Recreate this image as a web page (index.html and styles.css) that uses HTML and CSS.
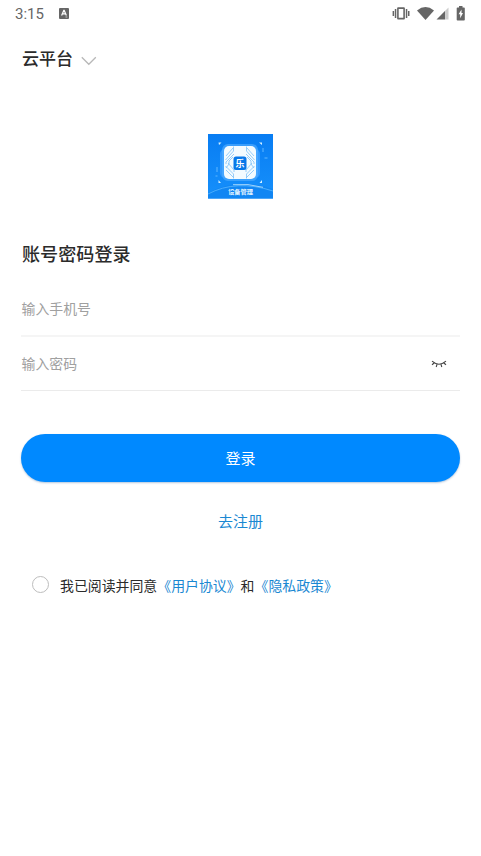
FILE: index.html
```html
<!DOCTYPE html>
<html lang="zh-CN">
<head>
<meta charset="utf-8">
<title>账号密码登录</title>
<link rel="stylesheet" href="styles.css">
</head>
<body>
<header class="status">
  <span class="time">3:15</span>
  <svg class="app-badge" width="10" height="11" viewBox="0 0 10 11"><rect width="10" height="11" rx="1" fill="#666"/><path d="M2.6 7.4 4.8 2.4h.4l2.2 5M3.4 5.9h3.2" fill="none" stroke="#fff" stroke-width="1.2"/><path d="M6.5 9h1.8" stroke="#ddd" stroke-width=".8"/></svg>
  <svg class="tray" width="76" height="18" viewBox="0 0 76 18">
    <g fill="#666">
      <path d="M.6 7h1.5v5H.6zM2.8 5h1.5v9H2.8zM13.8 5h1.5v9h-1.5zM16 7h1.5v5H16z"/>
      <path fill-rule="evenodd" d="M6.1 3.2h5.8q1 0 1 1v10.2q0 1-1 1H6.1q-1 0-1-1V4.200q0-1 1-1zM6.700 5v8.700h4.600V5z"/>
      <path d="M25 6.400Q33.500-.400 42 6.400L33.500 16z"/>
      <path d="M44.500 15.500 53.200 6.800v8.700z"/>
      <path fill="#ccc" d="M53.200 6.800 56.500 3.500v12h-3.300z"/>
      <path fill-rule="evenodd" d="M67 3.500V2h3.500v1.500H72q.8 0 .8.8v11.400q0 .8-.8.800h-6.500q-.8 0-.8-.8V4.300q0-.8.800-.8zm2.500 2L66.600 10.300H68.200v4l2.800-5.200h-1.500z"/>
    </g>
  </svg>
</header>
<main class="page">
  <div class="platform">
    <span>云平台</span>
    <svg width="16" height="10" viewBox="0 0 16 10"><path d="M.8 1.200 7.800 8.300l7-7.100" fill="none" stroke="#b8b8b8" stroke-width="1.300"/></svg>
  </div>
  <div class="logo">
    <svg width="65" height="65" viewBox="0 0 65 65">
      <defs>
        <linearGradient id="sky" x2="0" y2="1"><stop offset="0" stop-color="#087df3"/><stop offset="1" stop-color="#1690fb"/></linearGradient>
      </defs>
      <rect width="65" height="64.500" fill="url(#sky)"/>
      <path d="M0 59Q30 43 65 55v9.500H0z" fill="#1186f3"/>
      <path d="M0 60Q28 45 65 57" fill="none" stroke="#58b7ff" stroke-width=".8"/>
      <path d="M25 50.700q15-1.500 30 2.600" fill="none" stroke="#c4e8ff" stroke-width=".8"/>
      <rect x="12" y="15" width="40" height="29" rx="5" fill="#3399fd"/>
      <rect x="14" y="10" width="36" height="37" rx="6" fill="#4dabff" opacity=".7"/>
      <rect x="16" y="12" width="32" height="33" rx="5" fill="#f3fbff"/>
      <g fill="none" stroke="#7fc1f8" stroke-width=".8">
        <path d="M18 22l7-8M17.500 26l8-9V12.500M18 30v-2l8-8M18 34l3-4v-3l4-4M18 36l8 8M17.500 32l8 8v4.500M20 29l6 7v2"/>
        <path d="M46 22l-7-8M46.500 26l-8-9V12.500M46 30v-2l-8-8M46 34l-3-4v-3l-4-4M46 36l-8 8M46.500 32l-8 8v4.500M44 29l-6 7v2"/>
      </g>
      <rect x="25.500" y="22.500" width="13" height="13.500" rx="2.500" fill="#0878e9"/>
      <path d="M10.500 8.500h3l-2.500 2.500zM51 8.500h3v2.500zM10.500 49v-3l2.500 3zM54 49v-3l-2.500 3z" fill="#d6f1ff"/>
      <path d="M55 14v4M9 33v5M56.500 24h3M7.500 42h2" stroke="#61b7ff"/>
      <text class="logo-mark" x="32" y="32.500" text-anchor="middle">乐</text>
      <text class="logo-name" x="32.500" y="60.300" text-anchor="middle">设备管理</text>
    </svg>
  </div>
  <h1>账号密码登录</h1>
  <div class="field phone">输入手机号</div>
  <div class="field password"><span>输入密码</span>
    <svg width="16" height="9" viewBox="0 0 16 9"><path d="M1 1.200Q8 7.200 15 1.200M3.200 3 1 4.800M12.800 3 15 4.800M6 4.300 5.200 7M10 4.300l.8 2.700" fill="none" stroke="#444" stroke-width="1.100"/></svg>
  </div>
  <button class="login">登录</button>
  <a class="register">去注册</a>
  <div class="agreement"><i class="radio"></i><span>我已阅读并同意<a>《用户协议》</a>和<a>《隐私政策》</a></span></div>
</main>
</body>
</html>
```
FILE: styles.css
```css
* { box-sizing: border-box; }
body {
  margin: 0;
  background: #fff;
  color: #2b2b2b;
  font-family: "Noto Sans CJK SC", sans-serif;
}
svg { display: block; flex: none; }
.status {
  display: flex;
  align-items: center;
  height: 27px;
  padding: 0 13px 0 15px;
}
.time {
  width: 43.500px;
  font: 15px/27px Roboto, sans-serif;
  color: #666;
  padding-top: 1px;
}
.app-badge { margin-top: -1px; }
.tray { margin-left: auto; margin-top: -2px; }
.page { padding: 0 21px; }
.platform {
  display: flex;
  align-items: center;
  gap: 8px;
  height: 24px;
  margin-top: 19px;
  padding-left: 1px;
  font-size: 17px;
  line-height: 24px;
  font-weight: 500;
}
.platform svg { margin-top: 5px; }
.logo {
  display: flex;
  justify-content: center;
  margin-top: 64px;
}
.logo-mark { font-size: 9px; font-weight: 700; fill: #fff; }
.logo-name { font-size: 6.200px; font-weight: 700; fill: #e4f5ff; }
h1 {
  margin: 40px 0 0;
  padding-left: 1px;
  font-size: 18.100px;
  line-height: 28px;
  font-weight: 500;
}
.field {
  display: flex;
  align-items: center;
  justify-content: space-between;
  padding-left: .500px;
  font-size: 13.900px;
  color: #a0a0a0;
}
.phone {
  height: 55px;
  margin-top: 15px;
  padding-bottom: 2px;
  border-bottom: 2px solid #f5f5f5;
}
.password {
  height: 54px;
  padding-right: 13px;
  padding-bottom: 2px;
  border-bottom: 1px solid #ebebeb;
}
.password svg { margin-top: 4px; }
.login {
  display: block;
  width: 100%;
  height: 48px;
  margin-top: 43px;
  padding: 0;
  border: 0;
  border-radius: 24px;
  background: #0089ff;
  box-shadow: 0 1px 2px rgba(0, 70, 140, .3);
  color: #fff;
  font: 15px/48px "Noto Sans CJK SC", sans-serif;
}
a { color: #1a88d2; }
.register {
  display: block;
  margin-top: 27px;
  font-size: 15px;
  line-height: 24px;
  text-align: center;
}
.agreement {
  display: flex;
  align-items: center;
  gap: 11px;
  height: 24px;
  margin-top: 40px;
  padding-left: 11px;
  font-size: 13.900px;
  line-height: 24px;
  white-space: nowrap;
}
.radio {
  width: 17px;
  height: 17px;
  margin-top: -1px;
  border: 1px solid #bdbdbd;
  border-radius: 50%;
}
```
